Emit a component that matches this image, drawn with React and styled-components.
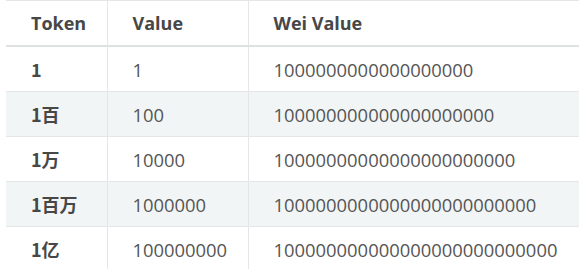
import React from 'react'
import styled, { createGlobalStyle } from 'styled-components'

const GlobalStyle = createGlobalStyle`
  html, body {
    margin: 0;
    padding: 0;
    background: #ffffff;
  }
  body {
    font-family: "Open Sans", "Noto Sans CJK SC", sans-serif;
    color: #4e4e4e;
  }
`

const rows = [
  { token: '1', value: '1', wei: '1000000000000000000' },
  { token: '1百', value: '100', wei: '100000000000000000000' },
  { token: '1万', value: '10000', wei: '10000000000000000000000' },
  { token: '1百万', value: '1000000', wei: '1000000000000000000000000' },
  { token: '1亿', value: '100000000', wei: '100000000000000000000000000' },
]

export default function App() {
  return (
    <Page>
      <GlobalStyle />
      <Table>
        <colgroup>
          <col style={{ width: 101 }} />
          <col style={{ width: 141 }} />
          <col />
        </colgroup>
        <thead>
          <tr>
            <HeadCell>Token</HeadCell>
            <HeadCell>Value</HeadCell>
            <HeadCell>Wei Value</HeadCell>
          </tr>
        </thead>
        <tbody>
          {rows.map((row, i) => (
            <Row key={row.token} striped={i % 2 === 1 ? 1 : 0}>
              <TokenCell>{row.token}</TokenCell>
              <Cell>{row.value}</Cell>
              <Cell>{row.wei}</Cell>
            </Row>
          ))}
        </tbody>
      </Table>
    </Page>
  )
}

const Page = styled.div`
  padding-left: 6px;
  overflow: hidden;
`

const Table = styled.table`
  width: 100%;
  border-collapse: collapse;
  table-layout: fixed;
  font-size: 18px;
  border-top: 1px solid #e4e6e7;
`

const HeadCell = styled.th`
  height: 44px;
  padding: 0 0 0 25px;
  text-align: left;
  font-weight: 700;
  color: #474747;
  border-bottom: 2px solid #dfe2e3;
  border-left: 1px solid #e4e6e7;
  white-space: nowrap;
  &:first-child {
    border-left: none;
  }
`

const Row = styled.tr`
  background: ${p => (p.striped ? '#f2f5f5' : '#ffffff')};
`

const Cell = styled.td`
  height: 44px;
  padding: 0 0 0 25px;
  border-bottom: 1px solid #e4e6e7;
  border-left: 1px solid #e4e6e7;
  font-size: 18.4px;
  font-weight: 400;
  color: #555555;
  white-space: nowrap;
`

const TokenCell = styled(Cell)`
  border-left: none;
  font-size: 18px;
  font-weight: 700;
  color: #474747;
  font-family: "Noto Sans CJK SC", "Open Sans", sans-serif;
`
